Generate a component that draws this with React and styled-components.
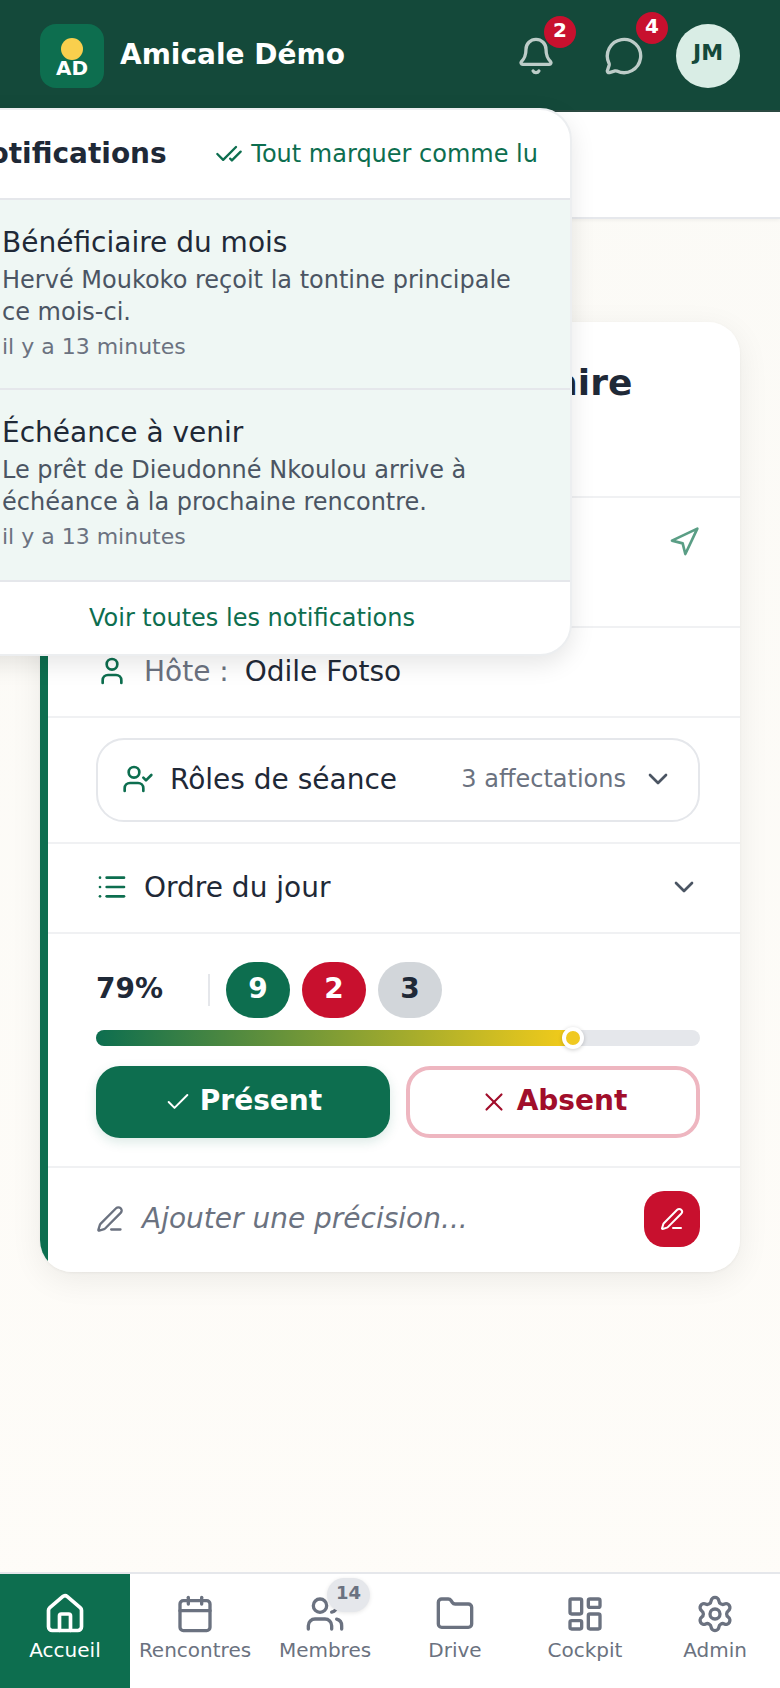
import React from 'react';
import styled, { createGlobalStyle } from 'styled-components';
import { Bell, MessageCircle, CheckCheck, Navigation, User, UserCheck, ChevronDown, List, Check, X, PenLine, Home, Calendar, Users, Folder, LayoutDashboard, Settings } from 'lucide-react';

const Global = createGlobalStyle`
  html, body { margin: 0; padding: 0; }
  body { font-family: "DejaVu Sans", sans-serif; background: #fdfbf7; }
  * { box-sizing: border-box; }
`;
const Page = styled.div`
  position: relative; width: 780px; height: 1688px; overflow: hidden;
  display: flex; flex-direction: column;
  background: linear-gradient(180deg, #fbfaf6 0%, #fefcf8 100%);
`;
const Header = styled.header`
  height: 112px; flex: none; background: #14493a; border-bottom: 2px solid #2c4a42;
  display: flex; align-items: center; padding: 2px 40px 0;
`;
const Logo = styled.div`
  width: 64px; height: 64px; border-radius: 16px; background: #0d6e4f;
  display: flex; flex-direction: column; align-items: center; padding-top: 14px;
`;
const Sun = styled.span`width: 22px; height: 22px; border-radius: 50%; background: #f9cf4d;`;
const LogoText = styled.span`color: #fff; font-weight: 700; font-size: 20px; line-height: 20px; margin-top: -2px;`;
const Brand = styled.div`margin-left: 16px; color: #fff; font-weight: 700; font-size: 28px; flex: 1; margin-top: -4px;`;
const IconWrap = styled.div`
  position: relative; width: 40px; height: 40px; color: rgba(255,255,255,.72); flex: none;
  margin-right: ${p => p.$mr}px; svg { display: block; }
`;
const CountBadge = styled.span`
  position: absolute; left: ${p => p.$left}px; top: ${p => p.$top}px;
  width: 32px; height: 32px; border-radius: 50%; background: #c8102e; color: #fff; padding-bottom: 4px;
  font-weight: 700; font-size: 20px; display: flex; align-items: center; justify-content: center;
`;
const Avatar = styled.div`
  width: 64px; height: 64px; border-radius: 50%; background: #d9ede5; color: #14493a;
  font-weight: 700; font-size: 22px; display: flex; align-items: center; justify-content: center; flex: none;
  padding-bottom: 7px;
`;
const SubBar = styled.div`
  height: 107px; flex: none; background: #fff; border-bottom: 2px solid #e6e8ec; box-shadow: 0 1px 4px rgba(0,0,0,.06);
`;
const Main = styled.main`flex: 1; padding: 103px 40px 0;`;
const Card = styled.section`
  height: 950px; padding-left: 8px; border-radius: 32px;
  background: linear-gradient(90deg, #0d6e4f 8px, #fff 8px);
  box-shadow: 0 8px 32px rgba(0,0,0,.07), 0 1px 3px rgba(0,0,0,.05); overflow: hidden;
`;
const TitleRow = styled.div`
  height: 176px; padding: 36px 40px 0 71px; border-bottom: 2px solid #f0f1f3;
  font-size: 36px; font-weight: 700; color: #1f2937; line-height: 50px; white-space: nowrap;
`;
const PlaceRow = styled.div`
  height: 130px; padding: 28px 40px 0 48px; border-bottom: 2px solid #f0f1f3;
  display: flex; justify-content: space-between; font-size: 28px; color: #1f2937;
`;
const NavArrow = styled(Navigation)`color: #5a9e85;`;
const HostRow = styled.div`
  height: 90px; padding: 0 40px 2px 48px; border-bottom: 2px solid #f0f1f3;
  display: flex; align-items: center; font-size: 28px; color: #1f2937;
  svg { color: #0d6e4f; margin-right: 16px; }
`;
const Muted = styled.span`color: #6b7280; margin-right: 16px;`;
const RolesRow = styled.div`height: 126px; padding: 20px 40px 0 48px; border-bottom: 2px solid #f0f1f3;`;
const RolesBox = styled.div`
  height: 84px; border: 2px solid #e5e7eb; border-radius: 28px; padding: 0 24px 2px;
  display: flex; align-items: center; font-size: 28px; color: #1f2937;
  > svg:first-child { color: #0d6e4f; margin-right: 16px; }
`;
const RolesCount = styled.span`margin-left: auto; font-size: 24px; color: #6b7280; margin-right: 16px;`;
const Chevron = styled(ChevronDown)`color: #4b5563;`;
const AgendaRow = styled.div`
  height: 90px; padding: 0 40px 2px 48px; border-bottom: 2px solid #f0f1f3;
  display: flex; align-items: center; font-size: 28px; color: #1f2937;
  > svg:first-child { color: #0d6e4f; margin-right: 16px; }
  > span { flex: 1; }
`;
const StatsBlock = styled.div`
  height: 234px; padding: 28px 40px 0 48px; border-bottom: 2px solid #f0f1f3;
`;
const StatLine = styled.div`display: flex; align-items: center; height: 56px;`;
const Percent = styled.span`width: 114px; font-size: 28px; font-weight: 700; color: #1f2937; border-right: 2px solid #e5e7eb; line-height: 29px; padding-bottom: 3px; margin-right: 16px;`;
const Pill = styled.span`
  width: 64px; height: 56px; border-radius: 28px; margin-right: 12px; padding-bottom: 3px;
  background: ${p => p.$bg}; color: ${p => p.$fg};
  font-size: 28px; font-weight: 700; display: flex; align-items: center; justify-content: center;
`;
const Track = styled.div`position: relative; height: 16px; border-radius: 8px; background: #e5e7eb; margin-top: 12px;`;
const Fill = styled.div`height: 100%; border-radius: 8px; background: linear-gradient(90deg, #0d6e4f, #f4cc1a);`;
const Thumb = styled.span`
  position: absolute; top: -3px; width: 22px; height: 22px; margin-left: -11px; border-radius: 50%;
  background: #f0c921; border: 4px solid #fff; box-shadow: 0 1px 4px rgba(0,0,0,.2);
`;
const Actions = styled.div`display: grid; grid-template-columns: 1fr 1fr; gap: 16px; margin-top: 20px;`;
const ActionBtn = styled.div`
  height: 72px; border-radius: 24px; display: flex; align-items: center; justify-content: center; gap: 8px;
  font-size: 28px; font-weight: 700; padding-bottom: 4px;
  background: ${p => p.$present ? '#0d6e4f' : '#fff'};
  color: ${p => p.$present ? '#fff' : '#a10e2b'};
  border: ${p => p.$present ? 'none' : '4px solid #eeb6c0'};
  box-shadow: ${p => p.$present ? '0 4px 12px rgba(13,110,79,.15)' : 'none'};
  svg { margin-top: 4px; }
`;
const NoteRow = styled.div`
  height: 102px; padding: 0 40px 0 48px; display: flex; align-items: center;
  > svg { color: #6b7280; margin-right: 18px; }
`;
const NoteText = styled.span`flex: 1; font-style: italic; font-size: 28px; color: #6b7280; padding-bottom: 2px;`;
const NoteBtn = styled.div`
  width: 56px; height: 56px; border-radius: 20px; background: #c8102e; color: #fff;
  display: flex; align-items: center; justify-content: center;
`;
const Popover = styled.aside`
  position: absolute; left: -66px; top: 108px; width: 638px; height: 548px;
  background: #fff; border-radius: 32px; border: 2px solid #eceef0;
  box-shadow: 0 8px 24px rgba(0,0,0,.1); overflow: hidden; display: flex; flex-direction: column;
`;
const PopHead = styled.div`
  height: 90px; flex: none; padding: 0 32px 0 30px; display: flex; align-items: center; justify-content: space-between;
  border-bottom: 2px solid #e5e7eb;
`;
const PopTitle = styled.span`font-size: 28px; font-weight: 700; color: #1f2937; margin-top: -2px;`;
const MarkAll = styled.span`display: flex; align-items: center; gap: 8px; font-size: 24px; color: #0d6e4f;`;
const Item = styled.div`
  height: ${p => p.$h}px; flex: none; padding: 25px 32px 0 66px; background: #eff7f4; border-bottom: 2px solid #e5e7eb;
`;
const ItemTitle = styled.div`font-size: 28px; line-height: 36px; color: #1f2937; margin-bottom: 3px;`;
const ItemBody = styled.div`font-size: 24px; line-height: 32px; color: #4b5563;`;
const ItemTime = styled.div`font-size: 22px; line-height: 28px; color: #6b7280; margin-top: 5px;`;
const PopFoot = styled.div`flex: 1; display: flex; align-items: center; justify-content: center; font-size: 24px; color: #0d6e4f; padding-right: 2px;`;
const BottomNav = styled.nav`
  height: 116px; flex: none; background: #fff; border-top: 2px solid #e5e7eb;
  display: grid; grid-template-columns: repeat(6, 1fr);
`;
const NavItem = styled.div`
  position: relative; display: flex; flex-direction: column; align-items: center; padding-top: 20px;
  background: ${p => p.$active ? '#0d6e4f' : 'transparent'};
  color: ${p => p.$active ? '#fff' : '#6b7280'};
  font-size: 20px;
  svg { display: block; transform: ${p => p.$active ? 'scale(1.1)' : 'none'}; }
`;
const NavLabel = styled.span`margin-top: 2px; line-height: 28px;`;
const NavBadge = styled.span`
  position: absolute; left: 67px; top: 4px; width: 43px; height: 34px; border-radius: 17px;
  background: #e5e7eb; color: #6b7280; font-size: 18px; font-weight: 700; padding-bottom: 5px;
  display: flex; align-items: center; justify-content: center; box-shadow: 0 1px 4px rgba(0,0,0,.1);
`;

const tabs = [
  { label: 'Accueil', Icon: Home, active: true },
  { label: 'Rencontres', Icon: Calendar },
  { label: 'Membres', Icon: Users, badge: '14' },
  { label: 'Drive', Icon: Folder },
  { label: 'Cockpit', Icon: LayoutDashboard },
  { label: 'Admin', Icon: Settings },
];

export default function App() {
  return (
    <Page>
      <Global />
      <Header>
        <Logo><Sun /><LogoText>AD</LogoText></Logo>
        <Brand>Amicale Démo</Brand>
        <IconWrap $mr={48}><Bell size={40} /><CountBadge $left={28} $top={-20}>2</CountBadge></IconWrap>
        <IconWrap $mr={32}><MessageCircle size={40} /><CountBadge $left={32} $top={-24}>4</CountBadge></IconWrap>
        <Avatar>JM</Avatar>
      </Header>
      <SubBar />
      <Main>
        <Card>
          <TitleRow>Rencontre extraordinaire</TitleRow>
          <PlaceRow><span>Salle des fêtes</span><NavArrow size={32} /></PlaceRow>
          <HostRow><User size={32} /><Muted>Hôte :</Muted>Odile Fotso</HostRow>
          <RolesRow>
            <RolesBox><UserCheck size={32} />Rôles de séance<RolesCount>3 affectations</RolesCount><Chevron size={32} /></RolesBox>
          </RolesRow>
          <AgendaRow><List size={32} /><span>Ordre du jour</span><Chevron size={32} /></AgendaRow>
          <StatsBlock>
            <StatLine>
              <Percent>79%</Percent>
              <Pill $bg="#0d6e4f" $fg="#fff">9</Pill>
              <Pill $bg="#c8102e" $fg="#fff">2</Pill>
              <Pill $bg="#d2d6da" $fg="#1f2937">3</Pill>
            </StatLine>
            <Track><Fill style={{ width: '79%' }} /><Thumb style={{ left: '79%' }} /></Track>
            <Actions>
              <ActionBtn $present><Check size={28} strokeWidth={1.7} />Présent</ActionBtn>
              <ActionBtn><X size={30} strokeWidth={1.7} />Absent</ActionBtn>
            </Actions>
          </StatsBlock>
          <NoteRow><PenLine size={28} /><NoteText>Ajouter une précision...</NoteText><NoteBtn><PenLine size={24} /></NoteBtn></NoteRow>
        </Card>
      </Main>
      <BottomNav>
        {tabs.map(({ label, Icon, active, badge }) => (
          <NavItem key={label} $active={active}>
            <Icon size={40} />
            {badge && <NavBadge>{badge}</NavBadge>}
            <NavLabel>{label}</NavLabel>
          </NavItem>
        ))}
      </BottomNav>
      <Popover>
        <PopHead><PopTitle>Notifications</PopTitle><MarkAll><CheckCheck size={28} />Tout marquer comme lu</MarkAll></PopHead>
        <Item $h={190}>
          <ItemTitle>Bénéficiaire du mois</ItemTitle>
          <ItemBody>Hervé Moukoko reçoit la tontine principale ce mois-ci.</ItemBody>
          <ItemTime>il y a 13 minutes</ItemTime>
        </Item>
        <Item $h={192}>
          <ItemTitle>Échéance à venir</ItemTitle>
          <ItemBody>Le prêt de Dieudonné Nkoulou arrive à échéance à la prochaine rencontre.</ItemBody>
          <ItemTime>il y a 13 minutes</ItemTime>
        </Item>
        <PopFoot>Voir toutes les notifications</PopFoot>
      </Popover>
    </Page>
  );
}
